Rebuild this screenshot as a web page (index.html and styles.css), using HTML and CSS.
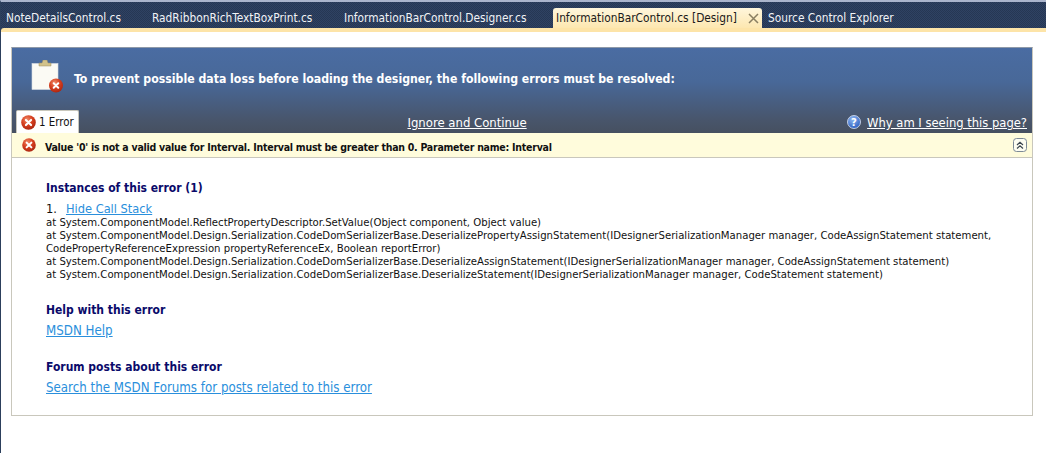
FILE: index.html
```html
<!DOCTYPE html>
<html lang="en">
<head>
<meta charset="utf-8">
<title>InformationBarControl.cs [Design]</title>
<link rel="stylesheet" href="styles.css">
</head>
<body>
<svg class="defs" width="0" height="0" aria-hidden="true">
  <defs>
    <radialGradient id="redball" cx="40%" cy="30%" r="75%">
      <stop offset="0" stop-color="#f08a68"/>
      <stop offset="0.5" stop-color="#d63f1f"/>
      <stop offset="1" stop-color="#a82410"/>
    </radialGradient>
    <radialGradient id="blueball" cx="40%" cy="30%" r="75%">
      <stop offset="0" stop-color="#8fb8f0"/>
      <stop offset="1" stop-color="#2a5cc0"/>
    </radialGradient>
    <symbol id="err" viewBox="0 0 14 14">
      <circle cx="7" cy="7" r="6.8" fill="url(#redball)"/>
      <path d="M4.6 4.6 9.4 9.4M9.4 4.6 4.6 9.4" stroke="#fff" stroke-width="2" stroke-linecap="round"/>
    </symbol>
  </defs>
</svg>
<div class="window">
  <nav class="tabs">
    <span class="tab">NoteDetailsControl.cs</span>
    <span class="tab">RadRibbonRichTextBoxPrint.cs</span>
    <span class="tab">InformationBarControl.Designer.cs</span>
    <span class="tab tab-active">InformationBarControl.cs [Design]
      <svg class="tab-close" width="11" height="11" viewBox="0 0 11 11"><path d="M1 1 10 10M10 1 1 10" stroke="#8a7f62" stroke-width="1.5"/></svg>
    </span>
    <span class="tab tab-last">Source Control Explorer</span>
  </nav>
  <main class="page">
    <section class="panel">
      <header class="banner">
        <div class="banner-title">
          <span class="clip-icon">
            <svg width="32" height="33" viewBox="0 0 32 33">
              <rect x="1" y="3.5" width="26" height="26" fill="#fbfaf4" stroke="#d8dce4" stroke-width="0.6"/>
              <path d="M8 6V3h3l1-3h4l1 3h3v3z" fill="#d2c28a" stroke="#9c8f60" stroke-width="0.5"/>
              <circle cx="25" cy="25.5" r="7" fill="url(#redball)"/>
              <path d="M22.7 23.2 27.3 27.8M27.3 23.2 22.7 27.8" stroke="#fff" stroke-width="2" stroke-linecap="round"/>
            </svg>
          </span>
          <h1>To prevent possible data loss before loading the designer, the following errors must be resolved:</h1>
        </div>
        <div class="banner-row">
          <span class="error-tab"><svg class="err" width="15" height="15"><use href="#err"/></svg>1 Error</span>
          <a class="banner-link ignore" href="#">Ignore and Continue</a>
          <span class="help">
            <svg class="help-icon" width="14" height="14" viewBox="0 0 14 14"><circle cx="7" cy="7" r="6.5" fill="url(#blueball)" stroke="#dfe8f8" stroke-width="0.8"/><text x="7" y="10.5" class="help-q">?</text></svg>
            <a class="banner-link" href="#">Why am I seeing this page?</a>
          </span>
        </div>
      </header>
      <div class="message">
        <svg class="err" width="14" height="14"><use href="#err"/></svg>
        <strong>Value '0' is not a valid value for Interval. Interval must be greater than 0. Parameter name: Interval</strong>
        <span class="collapse">
          <svg width="14" height="14" viewBox="0 0 14 14"><rect x="0.5" y="0.5" width="13" height="13" rx="3" fill="#fdfdf2" stroke="#7d8a96"/><path d="M4 7 7 4.2 10 7M4 10.5 7 7.7 10 10.5" fill="none" stroke="#3c4650" stroke-width="1.2"/></svg>
        </span>
      </div>
      <div class="details">
        <h2>Instances of this error (1)</h2>
        <div class="instance"><span class="num">1.</span><a href="#">Hide Call Stack</a></div>
        <div class="stack">at System.ComponentModel.ReflectPropertyDescriptor.SetValue(Object component, Object value)<br>
at System.ComponentModel.Design.Serialization.CodeDomSerializerBase.DeserializePropertyAssignStatement(IDesignerSerializationManager manager, CodeAssignStatement statement,<br>
CodePropertyReferenceExpression propertyReferenceEx, Boolean reportError)<br>
at System.ComponentModel.Design.Serialization.CodeDomSerializerBase.DeserializeAssignStatement(IDesignerSerializationManager manager, CodeAssignStatement statement)<br>
at System.ComponentModel.Design.Serialization.CodeDomSerializerBase.DeserializeStatement(IDesignerSerializationManager manager, CodeStatement statement)</div>
        <h2 class="gap-help">Help with this error</h2>
        <a class="block-link" href="#">MSDN Help</a>
        <h2 class="gap-forum">Forum posts about this error</h2>
        <a class="block-link" href="#">Search the MSDN Forums for posts related to this error</a>
      </div>
    </section>
  </main>
</div>
</body>
</html>
```
FILE: styles.css
```css
* { box-sizing: border-box; }
html, body { margin: 0; padding: 0; height: 100%; }
body {
  background: #fff;
  font-family: "DejaVu Sans Condensed", "DejaVu Sans", sans-serif;
  font-size: 12px;
  color: #111;
  overflow: hidden;
}
.defs { position: absolute; }
.window {
  height: 453px;
  border-left: 1px solid #2c3f5c;
  border-top: 2px solid #aab4cc;
  display: flex;
  flex-direction: column;
  background: #2c3f5c;
}
.tabs {
  height: 26px;
  flex: none;
  display: flex;
  align-items: flex-end;
  padding-left: 0;
  background-color: #2a3c5a;
  background-image: conic-gradient(#263754 25%, #2f4263 0 50%, #263754 0 75%, #2f4263 0);
  background-size: 2px 2px;
  color: #f1f3f6;
  font-size: 11.8px;
}
.tab {
  display: flex;
  align-items: center;
  height: 20px;
  white-space: nowrap;
  padding-left: 5px;
}
.tab:nth-child(1) { width: 146px; }
.tab:nth-child(2) { width: 192px; }
.tab:nth-child(3) { width: 214px; }
.tab-active {
  width: 209px;
  height: 20px;
  padding-left: 3px;
  background: linear-gradient(#fff6dc, #fde7b0);
  color: #1a1a1a;
  border-radius: 3px 3px 0 0;
  justify-content: flex-start;
  gap: 11px;
}
.tab-close { flex: none; }
.tab-last { padding-left: 6px; }
.page {
  flex: 1;
  background: #fff;
  border-top: 4px solid #fde4a8;
  border-top-left-radius: 3px;
  padding: 15px 13px 0 10px;
}
.panel {
  height: 369px;
  border: 1px solid #c9c7bc;
  border-top-color: #8e99a8;
  display: flex;
  flex-direction: column;
}
.banner {
  height: 85px;
  flex: none;
  display: flex;
  flex-direction: column;
  background: linear-gradient(#4a6ca2 0, #486898 40%, #48556b 85%, #465060 100%);
  color: #fff;
}
.banner-title {
  flex: 1;
  display: flex;
  align-items: flex-start;
  padding: 12px 0 0 19px;
  gap: 11px;
}
.banner-title h1 {
  margin: 12px 0 0;
  font-size: 12.2px;
  font-weight: 700;
  white-space: nowrap;
}
.banner-row {
  height: 24px;
  display: flex;
  align-items: flex-end;
  justify-content: space-between;
  padding: 0 5px 0 4px;
}
.error-tab {
  width: 63px;
  height: 23px;
  background: #fff;
  border: 1px solid #c9c7bc;
  border-bottom: 0;
  border-radius: 2px 2px 0 0;
  color: #111;
  display: flex;
  align-items: center;
  gap: 3px;
  padding-left: 4px;
  font-size: 11.4px;
}
.banner-link {
  color: #fff;
  font-size: 13px;
  line-height: 20px;
}
.ignore { margin-left: 8px; }
.help { display: flex; align-items: center; gap: 6px; }
.help .banner-link { font-size: 12.85px; }
.help-icon { margin-top: -2px; }
.help-q { fill: #fff; font-size: 10px; font-weight: 700; text-anchor: middle; font-family: "DejaVu Sans", sans-serif; }
.message {
  height: 25px;
  flex: none;
  display: flex;
  align-items: center;
  background: #fffcdc;
  border-bottom: 1px solid #c9c7bc;
  padding: 0 5px 0 10px;
  font-size: 10.5px;
  letter-spacing: -0.25px;
  color: #111;
}
.message .err { margin-top: -1px; }
.message .collapse { margin-top: -1px; }
.message strong { margin: 3px 0 0 9px; flex: 1; }
.collapse { display: flex; }
.details { padding: 22px 0 0 34px; }
h2 {
  margin: 0;
  font-size: 12px;
  font-weight: 700;
  line-height: 16px;
  color: #0a0a6a;
}
.instance { margin-top: 5px; line-height: 15px; font-size: 12.7px; }
.num { display: inline-block; width: 20px; }
a { color: #2a8fdc; }
.stack { font-size: 11.25px; line-height: 13px; margin-top: 0; }
.gap-help { margin-top: 21px; }
.gap-forum { margin-top: 20px; }
.block-link { display: block; margin-top: 5px; font-size: 13.2px; line-height: 16px; }
```
